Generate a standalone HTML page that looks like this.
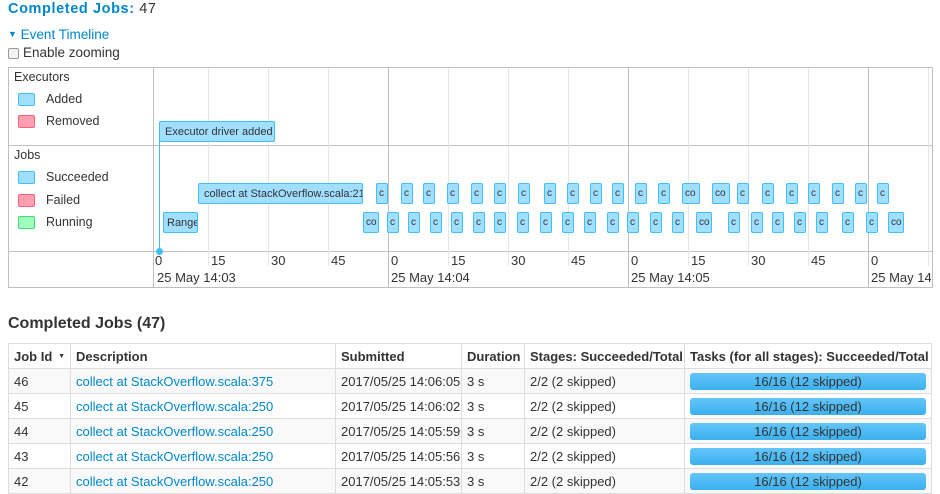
<!DOCTYPE html>
<html><head><style>
body{margin:0;width:940px;height:491px;overflow:hidden;background:#fff;font-family:"Liberation Sans",sans-serif;font-size:13px;color:#333;position:relative}
.a{position:absolute;white-space:nowrap}
.box{position:absolute;background:#a0dfff;border:1px solid #3EC0FF;border-radius:2px;box-sizing:border-box;font-size:11px;color:#333;overflow:hidden;padding:4px 5px;white-space:nowrap;line-height:12px}
.vl{position:absolute;top:68px;height:198px;width:1px;background:#e5e5e5}
.vM{position:absolute;top:68px;height:219px;width:1px;background:#bfbfbf}
.sw{position:absolute;width:17px;height:13px;border-radius:2px;box-sizing:border-box}
.lg{font-size:12.5px}
table{position:absolute;left:8px;top:343px;width:924px;border-collapse:collapse;font-size:13px;table-layout:fixed}
td,th{border:1px solid #ddd;padding:0 5px;height:24px;text-align:left;white-space:nowrap;overflow:hidden}
th{font-weight:bold}
tr.o td{background:#f9f9f9}
a{color:#0088cc;text-decoration:none}
.bar{height:17px;background:linear-gradient(#64c5fb,#3ab0ee);border-radius:3px;text-align:center;line-height:17px;color:#333;font-size:13px}
.ax{font-size:13px}
</style></head><body>
<div class="a" style="left:8px;top:1px;font-size:14.5px;letter-spacing:0.6px"><b style="color:#0088cc">Completed Jobs:</b> 47</div>
<div class="a" style="left:8px;top:27px;font-size:13.5px;color:#0088cc"><span style="font-size:9px;position:relative;top:-2px">&#9660;</span> Event Timeline</div>
<div class="a" style="left:8px;top:48px;width:9px;height:9px;border:1px solid #999;border-radius:2px;background:#f3f3f3"></div>
<div class="a" style="left:23px;top:45px;font-size:13.5px">Enable zooming</div>

<div class="a" style="left:8px;top:67px;width:923px;height:219px;border:1px solid #bfbfbf"></div>
<div class="a" style="left:153px;top:68px;width:1px;height:219px;background:#bfbfbf"></div>
<div class="a" style="left:8px;top:145px;width:924px;height:1px;background:#bfbfbf"></div>
<div class="a" style="left:8px;top:251px;width:924px;height:1px;background:#bfbfbf"></div>

<div class="vl" style="left:208px"></div><div class="vl" style="left:268px"></div><div class="vl" style="left:328px"></div>
<div class="vl" style="left:448px"></div><div class="vl" style="left:508px"></div><div class="vl" style="left:568px"></div>
<div class="vl" style="left:688px"></div><div class="vl" style="left:748px"></div><div class="vl" style="left:808px"></div>
<div class="vl" style="left:928px"></div>
<div class="vM" style="left:388px"></div><div class="vM" style="left:628px"></div><div class="vM" style="left:868px"></div>

<div class="a lg" style="left:14px;top:70px">Executors</div>
<div class="sw" style="left:18px;top:93px;background:#a0dfff;border:1px solid #3EC0FF"></div><div class="a lg" style="left:46px;top:92px">Added</div>
<div class="sw" style="left:18px;top:115px;background:#ff9fb0;border:1px solid #ff5f7f"></div><div class="a lg" style="left:46px;top:114px">Removed</div>
<div class="a lg" style="left:14px;top:148px">Jobs</div>
<div class="sw" style="left:18px;top:171px;background:#a0dfff;border:1px solid #3EC0FF"></div><div class="a lg" style="left:46px;top:170px">Succeeded</div>
<div class="sw" style="left:18px;top:194px;background:#ff9fb0;border:1px solid #ff5f7f"></div><div class="a lg" style="left:46px;top:193px">Failed</div>
<div class="sw" style="left:18px;top:216px;background:#a0ffc0;border:1px solid #3edf6f"></div><div class="a lg" style="left:46px;top:215px">Running</div>

<div class="a" style="left:159px;top:140px;width:1px;height:111px;background:#3EC0FF"></div>
<div class="a" style="left:156px;top:248px;width:7px;height:7px;border-radius:50%;background:#3EC0FF"></div>
<div class="box" style="left:159px;top:121px;width:116px;height:21px">Executor driver added</div>
<div class="box" style="left:198px;top:183px;width:165px;height:21px">collect at StackOverflow.scala:215</div>
<div class="box" style="left:163px;top:212px;width:35px;height:21px;padding:4px 3px">Range</div>

<div id="r1"></div>
<script>
var t=[376,401,423,447,471,494,518,544,567,590,612,635,658,682,712,737,762,786,808,832,855,877];
var b=[363,387,408,430,451,473,494,517,540,562,584,607,627,650,672,696,728,751,772,794,816,842,866,888];
var h='';
t.forEach(function(x){var w=(x==682||x==712)?18:12;h+='<div class="box" style="left:'+x+'px;top:183px;width:'+w+'px;height:21px;padding:4px 2px;font-size:10px">'+(w>12?'co':'c')+'</div>';});
b.forEach(function(x){var w=(x==363||x==696||x==888)?16:12;h+='<div class="box" style="left:'+x+'px;top:212px;width:'+w+'px;height:21px;padding:4px 2px;font-size:10px">'+(w>12?'co':'c')+'</div>';});
document.getElementById('r1').innerHTML=h;
</script>

<div class="a ax" style="left:155px;top:253px">0</div>
<div class="a ax" style="left:211px;top:253px">15</div>
<div class="a ax" style="left:271px;top:253px">30</div>
<div class="a ax" style="left:331px;top:253px">45</div>
<div class="a ax" style="left:391px;top:253px">0</div>
<div class="a ax" style="left:451px;top:253px">15</div>
<div class="a ax" style="left:511px;top:253px">30</div>
<div class="a ax" style="left:571px;top:253px">45</div>
<div class="a ax" style="left:631px;top:253px">0</div>
<div class="a ax" style="left:691px;top:253px">15</div>
<div class="a ax" style="left:751px;top:253px">30</div>
<div class="a ax" style="left:811px;top:253px">45</div>
<div class="a ax" style="left:871px;top:253px">0</div>
<div class="a ax" style="left:157px;top:270px">25 May 14:03</div>
<div class="a ax" style="left:391px;top:270px">25 May 14:04</div>
<div class="a ax" style="left:631px;top:270px">25 May 14:05</div>
<div class="a ax" style="left:871px;top:270px;width:60px;overflow:hidden">25 May 14:06</div>

<div class="a" style="left:8px;top:315px;font-size:16px;font-weight:bold">Completed Jobs (47)</div>
<table>
<colgroup><col style="width:62px"><col style="width:265px"><col style="width:126px"><col style="width:63px"><col style="width:160px"><col></colgroup>
<tr><th>Job Id <span style="font-size:7px;float:right;margin-top:4px">&#9660;</span></th><th>Description</th><th>Submitted</th><th>Duration</th><th>Stages: Succeeded/Total</th><th>Tasks (for all stages): Succeeded/Total</th></tr>
<tr class="o"><td>46</td><td><a>collect at StackOverflow.scala:375</a></td><td>2017/05/25 14:06:05</td><td>3 s</td><td>2/2 (2 skipped)</td><td><div class="bar">16/16 (12 skipped)</div></td></tr>
<tr><td>45</td><td><a>collect at StackOverflow.scala:250</a></td><td>2017/05/25 14:06:02</td><td>3 s</td><td>2/2 (2 skipped)</td><td><div class="bar">16/16 (12 skipped)</div></td></tr>
<tr class="o"><td>44</td><td><a>collect at StackOverflow.scala:250</a></td><td>2017/05/25 14:05:59</td><td>3 s</td><td>2/2 (2 skipped)</td><td><div class="bar">16/16 (12 skipped)</div></td></tr>
<tr><td>43</td><td><a>collect at StackOverflow.scala:250</a></td><td>2017/05/25 14:05:56</td><td>3 s</td><td>2/2 (2 skipped)</td><td><div class="bar">16/16 (12 skipped)</div></td></tr>
<tr class="o"><td>42</td><td><a>collect at StackOverflow.scala:250</a></td><td>2017/05/25 14:05:53</td><td>3 s</td><td>2/2 (2 skipped)</td><td><div class="bar">16/16 (12 skipped)</div></td></tr>
</table>
</body></html>
